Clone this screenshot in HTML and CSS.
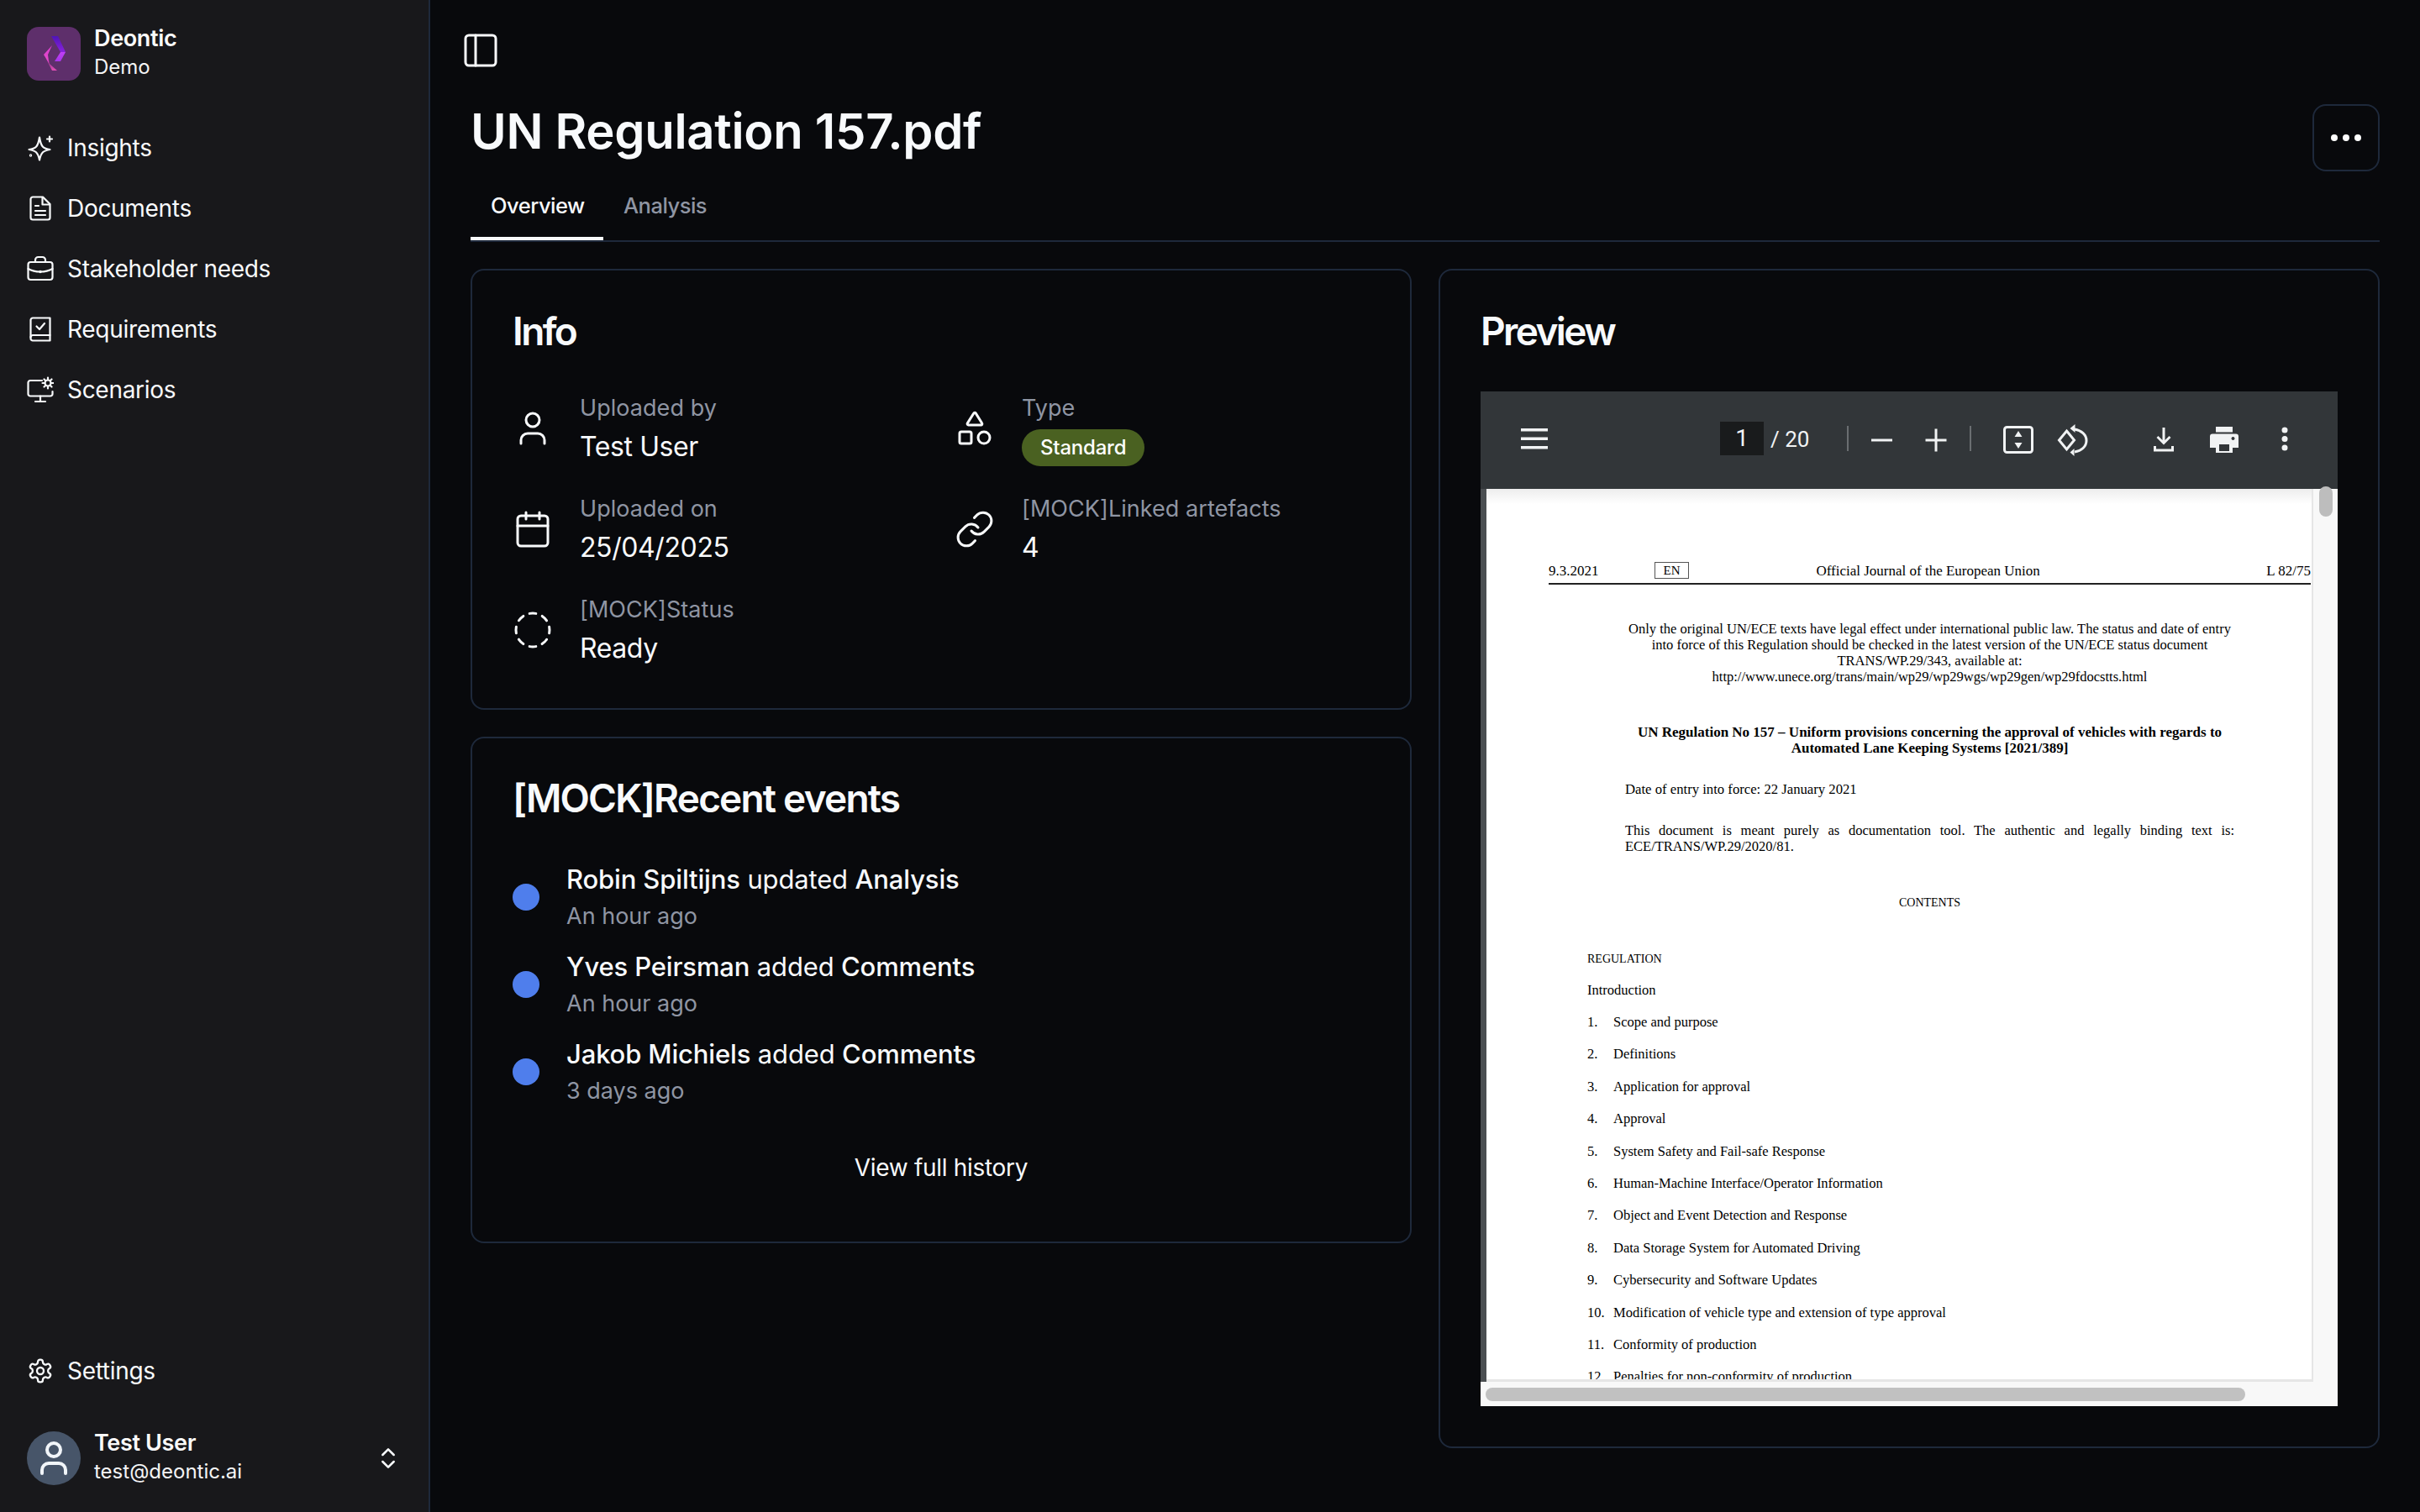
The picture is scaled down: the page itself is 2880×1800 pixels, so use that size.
FILE: index.html
```html
<!DOCTYPE html>
<html lang="en">
<head>
<meta charset="utf-8">
<title>UN Regulation 157.pdf</title>
<link rel="stylesheet" href="styles.css">
</head>
<body>
<div class="app">
  <aside class="sidebar">
    <div class="brand">
      <div class="logo">
        <svg viewBox="0 0 64 64" width="64" height="64">
          <defs>
            <linearGradient id="lg1" x1="0" y1="0" x2="0" y2="1"><stop offset="0" stop-color="#4f14b8"/><stop offset="1" stop-color="#8a22dc"/></linearGradient>
            <linearGradient id="lg2" x1="0" y1="0" x2="0" y2="1"><stop offset="0" stop-color="#c040f5"/><stop offset="1" stop-color="#a836ea"/></linearGradient>
            <linearGradient id="lg3" x1="0" y1="0" x2="0" y2="1"><stop offset="0" stop-color="#d83cd0"/><stop offset="1" stop-color="#e64cc8"/></linearGradient>
            <linearGradient id="lg4" x1="0" y1="0" x2="0" y2="1"><stop offset="0" stop-color="#6e2a80"/><stop offset="1" stop-color="#e24eb4"/></linearGradient>
          </defs>
          <polygon points="29,11 37,11 46,30 40,30" fill="url(#lg1)"/>
          <polygon points="40,30 46,30 40,41 33,41" fill="url(#lg2)"/>
          <polygon points="25,34 27,44 36,52 30,52 23,38" fill="url(#lg4)"/>
          <polygon points="30,22 25,33 26,43 20,33" fill="url(#lg3)"/>
        </svg>
      </div>
      <div class="brand-text">
        <div class="brand-name">Deontic</div>
        <div class="brand-sub">Demo</div>
      </div>
    </div>
    <nav class="nav">
      <a class="nav-item">
        <svg class="ic nav-ic" viewBox="0 0 32 32"><path d="M15 3.500c.9 5.600 2 9.300 4 11.200 1.900 1.800 4.800 2.700 8.500 3.300-3.700.6-6.600 1.500-8.500 3.300-2 1.900-3.100 4.700-4 9.200-.9-4.500-2-7.300-4-9.200-1.900-1.800-4.800-2.700-8.500-3.300 3.700-.6 6.600-1.500 8.500-3.300 2-1.900 3.100-5.600 4-11.200z"/><path d="M27 2.500v6M24 5.500h6"/><circle cx="4.500" cy="25" r=".6"/></svg>
        <span>Insights</span>
      </a>
      <a class="nav-item">
        <svg class="ic nav-ic" viewBox="0 0 32 32"><path d="M19 2.500H7a2.500 2.500 0 0 0-2.500 2.500v22A2.500 2.500 0 0 0 7 29.500h18a2.500 2.500 0 0 0 2.500-2.500V11z"/><path d="M18.500 3v8.500H27"/><path d="M10 13h4M10 19h12M10 24h12"/></svg>
        <span>Documents</span>
      </a>
      <a class="nav-item">
        <svg class="ic nav-ic" viewBox="0 0 32 32"><rect x="1.500" y="8" width="29" height="21" rx="3"/><path d="M10 8V5.500A3.500 3.500 0 0 1 13.500 2h5A3.500 3.500 0 0 1 22 5.500V8"/><path d="M1.500 16c4.500 2.500 9 3.500 14.500 3.500S26 18.500 30.500 16"/><circle cx="16" cy="19.500" r=".7"/></svg>
        <span>Stakeholder needs</span>
      </a>
      <a class="nav-item">
        <svg class="ic nav-ic" viewBox="0 0 32 32"><path d="M7 2.500h20.500v27H7A2.500 2.500 0 0 1 4.500 27V5A2.500 2.500 0 0 1 7 2.500z"/><path d="M4.500 25.500a2.500 2.500 0 0 1 2.500-2.500h20.500"/><path d="M11.500 12.500l3.500 3.500 6-7"/></svg>
        <span>Requirements</span>
      </a>
      <a class="nav-item">
        <svg class="ic nav-ic" viewBox="0 0 32 32"><path d="M18 5H4a2.500 2.500 0 0 0-2.500 2.500V21A2.500 2.500 0 0 0 4 23.500h24a2.500 2.500 0 0 0 2.500-2.500v-3"/><path d="M16 23.500V30M10 30h12"/><circle cx="25" cy="8" r="3.500"/><path d="M25 1.500v2M25 12.500v2M18.500 8h2M29.500 8h2M20.500 3.500l1.300 1.300M28.200 11.200l1.300 1.300M20.500 12.500l1.300-1.300M28.200 4.800l1.300-1.300"/></svg>
        <span>Scenarios</span>
      </a>
    </nav>
    <div class="sidebar-foot">
      <a class="nav-item">
        <svg class="ic nav-ic settings-ic" viewBox="0 0 24 24"><path d="M12.220 2h-.44a2 2 0 0 0-2 2v.18a2 2 0 0 1-1 1.730l-.43.25a2 2 0 0 1-2 0l-.15-.08a2 2 0 0 0-2.730.73l-.22.38a2 2 0 0 0 .73 2.730l.15.1a2 2 0 0 1 1 1.720v.51a2 2 0 0 1-1 1.740l-.15.09a2 2 0 0 0-.73 2.730l.22.38a2 2 0 0 0 2.730.73l.15-.08a2 2 0 0 1 2 0l.43.25a2 2 0 0 1 1 1.730V20a2 2 0 0 0 2 2h.44a2 2 0 0 0 2-2v-.18a2 2 0 0 1 1-1.730l.43-.25a2 2 0 0 1 2 0l.15.08a2 2 0 0 0 2.730-.73l.22-.39a2 2 0 0 0-.73-2.730l-.15-.08a2 2 0 0 1-1-1.740v-.5a2 2 0 0 1 1-1.740l.15-.09a2 2 0 0 0 .73-2.730l-.22-.38a2 2 0 0 0-2.730-.73l-.15.08a2 2 0 0 1-2 0l-.43-.25a2 2 0 0 1-1-1.730V4a2 2 0 0 0-2-2z"/><circle cx="12" cy="12" r="3"/></svg>
        <span>Settings</span>
      </a>
      <div class="user">
        <div class="avatar">
          <svg class="ic avatar-ic" viewBox="0 0 24 24"><path d="M19 21v-2a4 4 0 0 0-4-4H9a4 4 0 0 0-4 4v2"/><circle cx="12" cy="7" r="4"/></svg>
        </div>
        <div class="brand-text">
          <div class="brand-name">Test User</div>
          <div class="brand-sub">test@deontic.ai</div>
        </div>
        <svg class="ic chev-ic" viewBox="0 0 24 24"><path d="m7 15 5 5 5-5"/><path d="m7 9 5-5 5 5"/></svg>
      </div>
    </div>
  </aside>

  <main class="main">
    <button class="panel-btn">
      <svg class="ic panel-ic" viewBox="0 0 24 24"><rect x="3" y="3" width="18" height="18" rx="2"/><path d="M9 3v18"/></svg>
    </button>
    <header class="title-row">
      <h1 class="title">UN Regulation 157.pdf</h1>
      <button class="more-btn">
        <svg class="more-ic" viewBox="0 0 40 8" width="40" height="8"><circle cx="6" cy="4" r="4"/><circle cx="20" cy="4" r="4"/><circle cx="34" cy="4" r="4"/></svg>
      </button>
    </header>
    <div class="tabs">
      <div class="tab tab-active">Overview</div>
      <div class="tab">Analysis</div>
    </div>

    <div class="columns">
      <div class="col-left">
        <section class="card card-info">
          <h2 class="card-title title-tight">Info</h2>
          <div class="info-grid">
            <div class="info-item">
              <svg class="ic info-ic" viewBox="0 0 24 24"><path d="M19 21v-2a4 4 0 0 0-4-4H9a4 4 0 0 0-4 4v2"/><circle cx="12" cy="7" r="4"/></svg>
              <div><div class="info-label">Uploaded by</div><div class="info-value">Test User</div></div>
            </div>
            <div class="info-item">
              <svg class="ic info-ic" viewBox="0 0 24 24"><path d="M8.300 10a.7.7 0 0 1-.626-1.079L11.400 3a.7.7 0 0 1 1.198-.043L16.300 8.900a.7.7 0 0 1-.572 1.100Z"/><rect x="3" y="14" width="7" height="7" rx="1"/><circle cx="17.500" cy="17.500" r="3.500"/></svg>
              <div><div class="info-label">Type</div><div class="info-value"><span class="badge">Standard</span></div></div>
            </div>
            <div class="info-item">
              <svg class="ic info-ic" viewBox="0 0 24 24"><path d="M8 2v4M16 2v4"/><rect x="3" y="4" width="18" height="18" rx="2"/><path d="M3 10h18"/></svg>
              <div><div class="info-label">Uploaded on</div><div class="info-value">25/04/2025</div></div>
            </div>
            <div class="info-item">
              <svg class="ic info-ic" viewBox="0 0 24 24"><path d="M10 13a5 5 0 0 0 7.540.54l3-3a5 5 0 0 0-7.070-7.070l-1.720 1.710"/><path d="M14 11a5 5 0 0 0-7.540-.54l-3 3a5 5 0 0 0 7.070 7.070l1.710-1.710"/></svg>
              <div><div class="info-label">[MOCK]Linked artefacts</div><div class="info-value">4</div></div>
            </div>
            <div class="info-item">
              <svg class="ic info-ic" viewBox="0 0 24 24"><path d="M10.100 2.182a10 10 0 0 1 3.800 0"/><path d="M13.900 21.818a10 10 0 0 1-3.800 0"/><path d="M17.609 3.721a10 10 0 0 1 2.690 2.700"/><path d="M2.182 13.900a10 10 0 0 1 0-3.800"/><path d="M20.279 17.609a10 10 0 0 1-2.700 2.690"/><path d="M21.818 10.100a10 10 0 0 1 0 3.800"/><path d="M3.721 6.391a10 10 0 0 1 2.700-2.690"/><path d="M6.391 20.279a10 10 0 0 1-2.690-2.700"/></svg>
              <div><div class="info-label">[MOCK]Status</div><div class="info-value">Ready</div></div>
            </div>
          </div>
        </section>

        <section class="card card-events">
          <h2 class="card-title">[MOCK]Recent events</h2>
          <div class="events">
            <div class="event"><span class="dot"></span><div><div class="event-name"><b>Robin Spiltijns</b> updated <b>Analysis</b></div><div class="event-time">An hour ago</div></div></div>
            <div class="event"><span class="dot"></span><div><div class="event-name"><b>Yves Peirsman</b> added <b>Comments</b></div><div class="event-time">An hour ago</div></div></div>
            <div class="event"><span class="dot"></span><div><div class="event-name"><b>Jakob Michiels</b> added <b>Comments</b></div><div class="event-time">3 days ago</div></div></div>
          </div>
          <div class="history">View full history</div>
        </section>
      </div>

      <section class="card card-preview">
        <h2 class="card-title title-tight">Preview</h2>
        <div class="viewer">
          <div class="toolbar">
            <svg class="tb-ic tb-menu" viewBox="0 0 48 48"><path d="M8 10h32v3.500H8zM8 20.500h32V24H8zM8 31h32v3.500H8z"/></svg>
            <div class="tb-page">1</div>
            <div class="tb-total">/ 20</div>
            <span class="tb-div tb-div-a"></span>
            <svg class="tb-ic tb-minus" viewBox="0 0 48 48"><path d="M12 22.500h25v3H12z"/></svg>
            <svg class="tb-ic tb-plus" viewBox="0 0 48 48"><path d="M11.500 22.500h11v-12h3v12h11v3h-11v12h-3v-12h-11z"/></svg>
            <span class="tb-div tb-div-b"></span>
            <svg class="tb-ic tb-fit" viewBox="0 0 48 48"><rect x="7.500" y="8.500" width="33" height="30" rx="3" fill="none" stroke="#f1f3f4" stroke-width="3"/><path d="M24 13l4.500 7h-9zM24 34l-4.500-7h9z"/></svg>
            <svg class="tb-ic tb-rotate" viewBox="0 0 48 48"><path d="M17.500 13l9 11-9 11-9-11z" fill="none" stroke="#f1f3f4" stroke-width="3"/><path d="M27 11c8 1.500 14 6.500 14 13.500S35 37 27 38" fill="none" stroke="#f1f3f4" stroke-width="3"/><path d="M27.500 5v10l-6-5zM26.500 43v-9l-5 4.500z"/></svg>
            <svg class="tb-ic tb-download" viewBox="0 0 48 48"><path d="M22.500 9h3v15l5-5 2 2-8.500 8.500L15.500 21l2-2 5 5zM12 31h3v3.500h18V31h3v6.500H12z"/></svg>
            <svg class="tb-ic tb-print" viewBox="0 0 48 48"><path d="M14 8h20v6.500H14z"/><path fill-rule="evenodd" d="M10 16.500h28a3 3 0 0 1 3 3V33h-7v6H14v-6H7V19.500a3 3 0 0 1 3-3zM18 29v8h12v-8zM34.500 20a2 2 0 1 0 .01 0z"/></svg>
            <svg class="tb-ic tb-dots" viewBox="0 0 48 48"><circle cx="24" cy="12" r="3.500"/><circle cx="24" cy="22.500" r="3.500"/><circle cx="24" cy="33" r="3.500"/></svg>
          </div>
          <div class="vscroll-thumb"></div>
          <div class="viewer-body">
            <div class="gutter"></div>
            <div class="page">
              <div class="pdf-head">
                <span class="pdf-date">9.3.2021</span>
                <span class="pdf-en">EN</span>
                <span class="pdf-oj">Official Journal of the European Union</span>
                <span class="pdf-num">L 82/75</span>
              </div>
              <p class="pdf-notice">Only the original UN/ECE texts have legal effect under international public law. The status and date of entry<br>into force of this Regulation should be checked in the latest version of the UN/ECE status document<br>TRANS/WP.29/343, available at:<br>http://www.unece.org/trans/main/wp29/wp29wgs/wp29gen/wp29fdocstts.html</p>
              <p class="pdf-title">UN Regulation No 157 – Uniform provisions concerning the approval of vehicles with regards to<br>Automated Lane Keeping Systems [2021/389]</p>
              <p class="pdf-date-line">Date of entry into force: 22 January 2021</p>
              <p class="pdf-doc">This document is meant purely as documentation tool. The authentic and legally binding text is: ECE/TRANS/WP.29/2020/81.</p>
              <p class="pdf-contents">CONTENTS</p>
              <p class="pdf-reg">REGULATION</p>
              <p class="pdf-intro">Introduction</p>
              <ol class="pdf-toc">
                <li><span>1.</span>Scope and purpose</li>
                <li><span>2.</span>Definitions</li>
                <li><span>3.</span>Application for approval</li>
                <li><span>4.</span>Approval</li>
                <li><span>5.</span>System Safety and Fail-safe Response</li>
                <li><span>6.</span>Human-Machine Interface/Operator Information</li>
                <li><span>7.</span>Object and Event Detection and Response</li>
                <li><span>8.</span>Data Storage System for Automated Driving</li>
                <li><span>9.</span>Cybersecurity and Software Updates</li>
                <li><span>10.</span>Modification of vehicle type and extension of type approval</li>
                <li><span>11.</span>Conformity of production</li>
                <li><span>12.</span>Penalties for non-conformity of production</li>
              </ol>
            </div>
            <div class="vscroll"></div>
          </div>
          <div class="hscroll"><div class="hscroll-thumb"></div></div>
        </div>
      </section>
    </div>
  </main>
</div>
</body>
</html>
```
FILE: styles.css
```css
* { box-sizing: border-box; }
html, body { margin: 0; padding: 0; height: 100%; }
body { background: #08090c; color: #f8fafc; font-family: "Inter", "Liberation Sans", sans-serif; overflow: hidden; }
p, h1, h2, ol { margin: 0; padding: 0; }
.app { display: flex; height: 1800px; }

.ic { fill: none; stroke: currentColor; stroke-width: 2; stroke-linecap: round; stroke-linejoin: round; flex: none; display: block; }

/* Sidebar */
.sidebar { width: 512px; flex: none; background: #18181b; border-right: 2px solid #1e293b; padding: 32px 32px 32px; display: flex; flex-direction: column; }
.brand { display: flex; align-items: flex-start; gap: 16px; height: 64px; }
.logo { width: 64px; height: 64px; border-radius: 14px; background: #5e2f6b; flex: none; overflow: hidden; }
.logo svg { display: block; }
.brand-text { display: flex; flex-direction: column; gap: 2px; min-width: 0; margin-top: -2px; }
.brand-name { font-size: 27px; line-height: 32px; font-weight: 600; letter-spacing: -0.35px; color: #fafafa; }
.brand-sub { font-size: 24px; line-height: 32px; font-weight: 400; color: #f4f4f5; }
.nav { margin-top: 44px; display: flex; flex-direction: column; }
.nav-item { display: flex; align-items: center; gap: 16px; height: 72px; font-size: 28px; font-weight: 400; letter-spacing: -0.3px; color: #f8fafc; }
.nav-ic { width: 32px; height: 32px; stroke-width: 2.2; }
.settings-ic { stroke-width: 1.750; }
.sidebar-foot { margin-top: auto; display: flex; flex-direction: column; gap: 36px; }
.user { display: flex; align-items: flex-start; gap: 16px; height: 64px; }
.avatar { width: 64px; height: 64px; border-radius: 50%; background: #475569; display: flex; align-items: center; justify-content: center; flex: none; color: #f1f5f9; }
.avatar-ic { width: 48px; height: 48px; }
.chev-ic { width: 32px; height: 32px; margin: 16px 0 0 auto; stroke-width: 1.900; }

/* Main */
.main { flex: 1; min-width: 0; padding: 36px 48px 0; display: flex; flex-direction: column; }
.panel-btn { background: none; border: 0; padding: 0; margin-left: -12px; width: 48px; height: 48px; color: #f8fafc; display: block; }
.panel-ic { width: 48px; height: 48px; stroke-width: 1.500; }
.title-row { display: flex; align-items: flex-start; justify-content: space-between; height: 80px; margin-top: 40px; }
.title { font-size: 58px; line-height: 64px; font-weight: 600; letter-spacing: -0.3px; color: #f8fafc; }
.more-btn { width: 80px; height: 80px; background: none; border: 2px solid #1e293b; border-radius: 16px; display: flex; align-items: center; justify-content: center; padding: 0; }
.more-ic { fill: #fff; display: block; }
.tabs { display: flex; margin-top: 20px; border-bottom: 2px solid #1e293b; height: 64px; }
.tab { padding: 0 24px; height: 62px; line-height: 42px; font-size: 25.500px; font-weight: 500; color: #8f95a3; letter-spacing: -0.5px; }
.tab-active { color: #f8fafc; border-bottom: 4px solid #f8fafc; width: 158px; }

.columns { display: grid; grid-template-columns: 1120px 1120px; gap: 32px; margin-top: 32px; align-items: start; }
.col-left { display: flex; flex-direction: column; gap: 32px; }
.card { border: 2px solid #1e293b; border-radius: 16px; padding: 48px; background: #08090c; }
.card-info { padding-bottom: 49px; }
.card-events { padding-top: 47px; }
.card-title { font-size: 46px; line-height: 48px; font-weight: 600; letter-spacing: -1.800px; color: #f8fafc; }
.title-tight { letter-spacing: -2.600px; }

.info-grid { display: grid; grid-template-columns: 494px 494px; column-gap: 32px; row-gap: 32px; margin-top: 48px; }
.info-item { display: flex; align-items: center; gap: 32px; height: 88px; }
.info-ic { width: 48px; height: 48px; stroke-width: 1.500; }
.info-label { font-size: 27px; line-height: 40px; color: #8f95a3; letter-spacing: 0.05px; }
.info-value { font-size: 32px; line-height: 48px; margin-top: 2px; margin-bottom: -2px; color: #f8fafc; letter-spacing: -0.4px; }
.badge { display: inline-block; height: 44px; line-height: 44px; padding: 0 22px; border-radius: 22px; background: #4a6121; color: #fff; font-size: 24px; font-weight: 500; letter-spacing: -0.2px; vertical-align: top; margin-top: 3px; }

.events { display: flex; flex-direction: column; gap: 16px; margin-top: 50px; }
.event { display: flex; align-items: center; gap: 32px; height: 88px; }
.dot { width: 32px; height: 32px; border-radius: 50%; background: #4f7eec; flex: none; }
.event-name { font-size: 31px; line-height: 46px; font-weight: 400; letter-spacing: -0.15px; color: #f8fafc; }
.event-name b { font-weight: 500; }
.event-time { font-size: 27px; line-height: 42px; color: #8f95a3; letter-spacing: 0; }
.history { height: 80px; margin-top: 30px; line-height: 80px; text-align: center; font-size: 28px; font-weight: 400; letter-spacing: -0.3px; color: #f8fafc; }

.card-preview { height: 1404px; }

/* PDF viewer */
.viewer { position: relative; margin-top: 48px; width: 1020px; height: 1208px; display: flex; flex-direction: column; background: #f8f8f8; overflow: hidden; }
.toolbar { height: 116px; flex: none; background: #323639; display: flex; align-items: flex-start; padding-top: 34px; position: relative; z-index: 1; }
.tb-ic { width: 48px; height: 48px; fill: #f1f3f4; flex: none; display: block; }
.tb-menu { margin-left: 40px; }
.tb-page { margin: 2px 0 0 197px; width: 52px; height: 40px; background: #191b1c; text-align: center; font: 400 28px/40px "Roboto", sans-serif; color: #f1f3f4; }
.tb-total { margin: 2px 0 0 8px; width: 70px; height: 40px; font: 400 26px/42px "Roboto", sans-serif; color: #f1f3f4; white-space: nowrap; }
.tb-div { width: 2px; height: 30px; background: #6a6e71; flex: none; margin-top: 7px; }
.tb-div-a { margin-left: 21px; }
.tb-minus { margin-left: 15px; }
.tb-plus { margin-left: 17px; }
.tb-div-b { margin-left: 16px; }
.tb-fit { margin-left: 32px; }
.tb-rotate { margin-left: 16px; }
.tb-download { margin-left: 61px; }
.tb-print { margin-left: 24px; }
.tb-dots { margin-left: 24px; }
.viewer-body { flex: 1; min-height: 0; display: flex; overflow: hidden; }
.gutter { width: 7px; flex: none; background: #4b4f52; }
.page { flex: 1; min-width: 0; position: relative; background: #fff; border-right: 2px solid #e6e6e6; border-bottom: 3px solid #e6e6e6; padding-left: 74px; overflow: hidden; color: #000; font-family: "Liberation Serif", serif; font-size: 16.500px; line-height: 19px; }
.page::before { content: ""; position: absolute; left: 0; right: 0; top: 0; height: 18px; background: linear-gradient(#ededed, #fff); }
.vscroll { width: 29px; flex: none; background: #f8f8f8; }
.vscroll-thumb { position: absolute; left: 998px; top: 113px; width: 16px; height: 36px; border-radius: 8px; background: #bdbdbd; z-index: 2; }
.hscroll { height: 29px; flex: none; background: #f8f8f8; padding: 7px 0 0 6px; }
.hscroll-thumb { width: 904px; height: 16px; border-radius: 8px; background: #c1c1c1; }

.pdf-head { position: relative; margin-top: 86px; width: 907px; height: 28px; border-bottom: 2px solid #222; display: flex; align-items: flex-start; line-height: 24px; font-size: 17px; white-space: nowrap; }
.pdf-date { width: 126px; flex: none; }
.pdf-en { width: 41px; height: 20px; line-height: 19px; margin-top: 1px; border: 1px solid #555; text-align: center; flex: none; font-size: 15px; }
.pdf-oj { flex: 1; text-align: center; padding-right: 118px; }
.pdf-num { flex: none; }
.pdf-notice, .pdf-title { width: 907px; text-align: center; white-space: nowrap; }
.pdf-notice { margin-top: 43px; }
.pdf-title { margin-top: 47px; font-weight: 700; font-size: 17px; }
.pdf-date-line { margin: 30px 0 0 91px; font-size: 16.700px; }
.pdf-doc { margin: 30px 0 0 91px; width: 725px; text-align: justify; }
.pdf-contents { width: 907px; margin-top: 48px; text-align: center; font-size: 14px; }
.pdf-reg { margin: 48px 0 0 46px; font-size: 14px; }
.pdf-intro { margin: 18px 0 0 46px; }
.pdf-toc { list-style: none; margin: 19px 0 0 46px; display: flex; flex-direction: column; gap: 19.400px; }
.pdf-toc li { display: flex; }
.pdf-toc span { width: 31px; flex: none; }
```
